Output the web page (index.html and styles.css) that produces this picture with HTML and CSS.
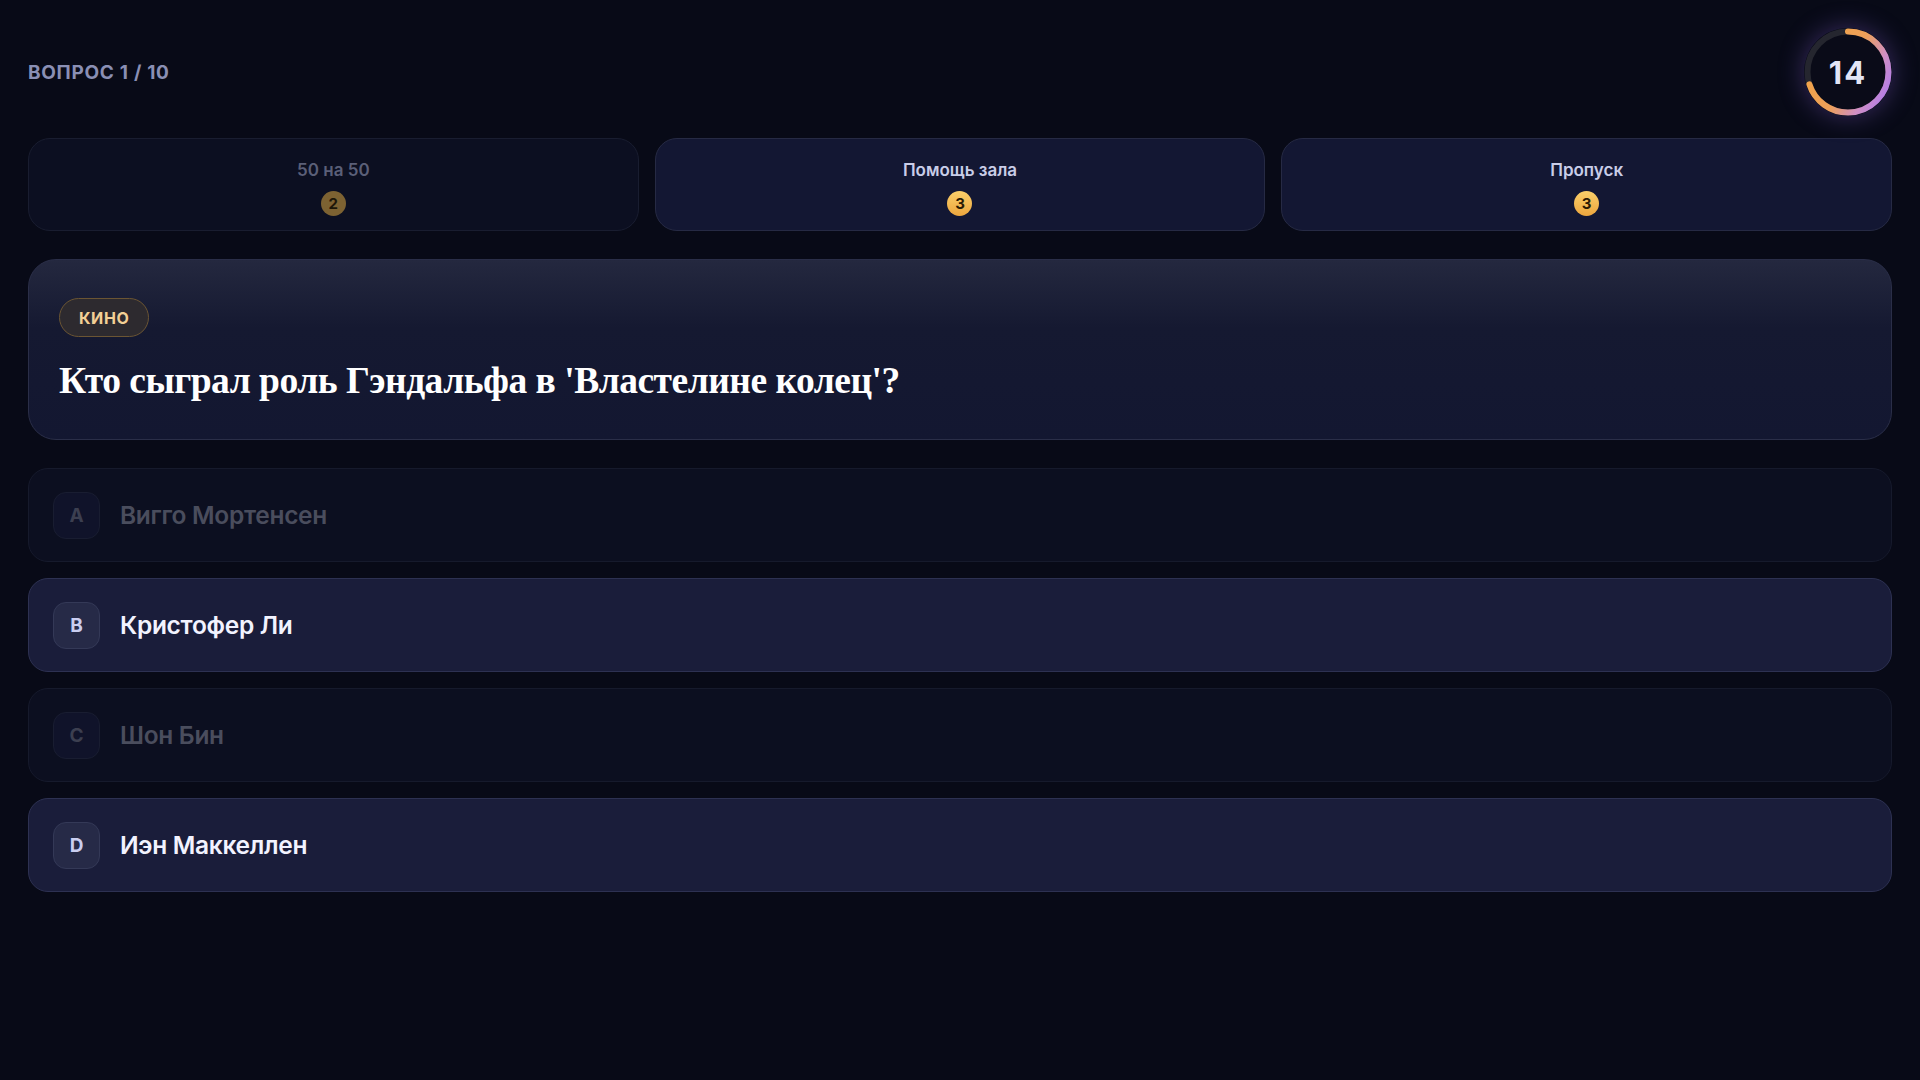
FILE: index.html
```html
<!DOCTYPE html>
<html lang="ru">

<head>
    <meta charset="UTF-8">
    <meta name="viewport" content="width=device-width, initial-scale=1.0">

    <title>Викторина</title>
    <link rel="stylesheet" href="styles.css">
</head>
<body>
    <div class="top">
        <div class="counter">ВОПРОС 1 / 10</div>
        <div class="timer">
            <svg width="88" height="88" viewBox="0 0 88 88">
                <defs>
                    <linearGradient id="ring" x1="0.75" y1="0" x2="0.25" y2="1">
                        <stop offset="0" stop-color="#f2a444"/>
                        <stop offset="0.5" stop-color="#eda05a"/>
                        <stop offset="0.78" stop-color="#d08fc4"/>
                        <stop offset="1" stop-color="#b47de8"/>
                    </linearGradient>
                </defs>
                <circle cx="44" cy="44" r="40.5" fill="#0a0b18" stroke="#25262f" stroke-width="6"/>
                <!-- 14 of 20 seconds left -->
                <circle cx="44" cy="44" r="40.5" fill="none" stroke="url(#ring)" stroke-width="6"
                    stroke-linecap="round" stroke-dasharray="178 254.5" transform="rotate(-90 44 44)"/>
            </svg>
            <span class="timer-num">14</span>
        </div>
    </div>

    <div class="lifelines">
        <div class="lifeline used">
            <span class="lifeline-name">50 на 50</span>
            <span class="coin">2</span>
        </div>
        <div class="lifeline">
            <span class="lifeline-name">Помощь зала</span>
            <span class="coin">3</span>
        </div>
        <div class="lifeline">
            <span class="lifeline-name">Пропуск</span>
            <span class="coin">3</span>
        </div>
    </div>

    <div class="question">
        <span class="tag">КИНО</span>
        <h1 class="question-text">Кто сыграл роль Гэндальфа в 'Властелине колец'?</h1>
    </div>

    <div class="answers" id="answers">
        <div class="answer hidden"><span class="letter">A</span><span class="answer-text">Вигго Мортенсен</span></div>
        <div class="answer"><span class="letter">B</span><span class="answer-text">Кристофер Ли</span></div>
        <div class="answer hidden"><span class="letter">C</span><span class="answer-text">Шон Бин</span></div>
        <div class="answer"><span class="letter">D</span><span class="answer-text">Иэн Маккеллен</span></div>
    </div>
</body>

</html>
```

FILE: styles.css
```css
body {
    margin: 0;
    padding: 28px;
    background-color: #080a17;
    font-family: Inter, "Noto Sans", sans-serif;
    color: #e6e8f5;
}

.top {
    display: flex;
    justify-content: space-between;
    align-items: center;
    height: 88px;
}

.counter {
    font-size: 19px;
    font-weight: 700;
    letter-spacing: 0.7px;
    color: #8a8fb4;
}

.timer {
    position: relative;
    width: 88px;
    height: 88px;
    border-radius: 50%;
    box-shadow: 0 0 26px rgba(150, 110, 235, 0.35);
}

.timer svg {
    display: block;
}

.timer-num {
    position: absolute;
    inset: 0;
    display: flex;
    align-items: center;
    justify-content: center;
    font-size: 31px;
    font-weight: 700;
    letter-spacing: 2px;
    color: #e2e5f6;
}

.lifelines {
    display: grid;
    grid-template-columns: repeat(3, 1fr);
    gap: 16px;
    margin-top: 22px;
}

.lifeline {
    height: 93px;
    box-sizing: border-box;
    padding-top: 6px;
    display: flex;
    flex-direction: column;
    align-items: center;
    justify-content: center;
    gap: 10px;
    background-color: #131733;
    border: 1px solid #262a44;
    border-radius: 22px;
}

.lifeline-name {
    font-size: 17px;
    font-weight: 600;
    line-height: 22px;
    color: #c9cde8;
}

.coin {
    width: 25px;
    height: 25px;
    border-radius: 50%;
    display: flex;
    align-items: center;
    justify-content: center;
    font-size: 15px;
    font-weight: 700;
    color: #2a1a04;
    background: linear-gradient(180deg, #fbcf6a, #eca63e);
}

.lifeline.used {
    background-color: #0c0f21;
    border-color: #191d30;
}

.lifeline.used .lifeline-name {
    color: #5b5f78;
}

.lifeline.used .coin {
    background: #7d6232;
    color: #1d1608;
}

.question {
    margin-top: 28px;
    padding: 38px 30px 36px;
    background: linear-gradient(180deg, #24283f 0%, #151931 38%, #131731 100%);
    border: 1px solid #2a2e48;
    border-radius: 28px;
}

.tag {
    display: inline-flex;
    align-items: center;
    height: 39px;
    box-sizing: border-box;
    padding: 0 19px;
    font-size: 16px;
    font-weight: 700;
    letter-spacing: 0.6px;
    color: #f3cf95;
    background-color: #2d2a2f;
    border: 1px solid #6b5533;
    border-radius: 20px;
}

.question-text {
    margin: 21px 0 0;
    font-family: "Liberation Serif", serif;
    font-size: 37.5px;
    font-weight: 700;
    line-height: 45px;
    letter-spacing: -0.5px;
    color: #ffffff;
}

.answers {
    display: flex;
    flex-direction: column;
    gap: 16px;
    margin-top: 28px;
}

.answer {
    height: 94px;
    box-sizing: border-box;
    display: flex;
    align-items: center;
    gap: 20px;
    padding: 0 24px;
    background-color: #1a1d3a;
    border: 1px solid #2d3152;
    border-radius: 20px;
}

.letter {
    width: 47px;
    height: 47px;
    box-sizing: border-box;
    display: flex;
    align-items: center;
    justify-content: center;
    font-size: 19px;
    font-weight: 700;
    color: #c9cdf0;
    background-color: #262a47;
    border: 1px solid #343957;
    border-radius: 13px;
}

.answer-text {
    font-size: 24.5px;
    font-weight: 600;
    letter-spacing: -0.3px;
    color: #f2f3ff;
}

/* removed by 50/50 */
.answer.hidden {
    background-color: #0c0f20;
    border-color: #161a2c;
}

.answer.hidden .letter {
    background-color: #10132a;
    border-color: #191d31;
    color: #3c3f50;
}

.answer.hidden .answer-text {
    color: #4a4d5d;
}
```
